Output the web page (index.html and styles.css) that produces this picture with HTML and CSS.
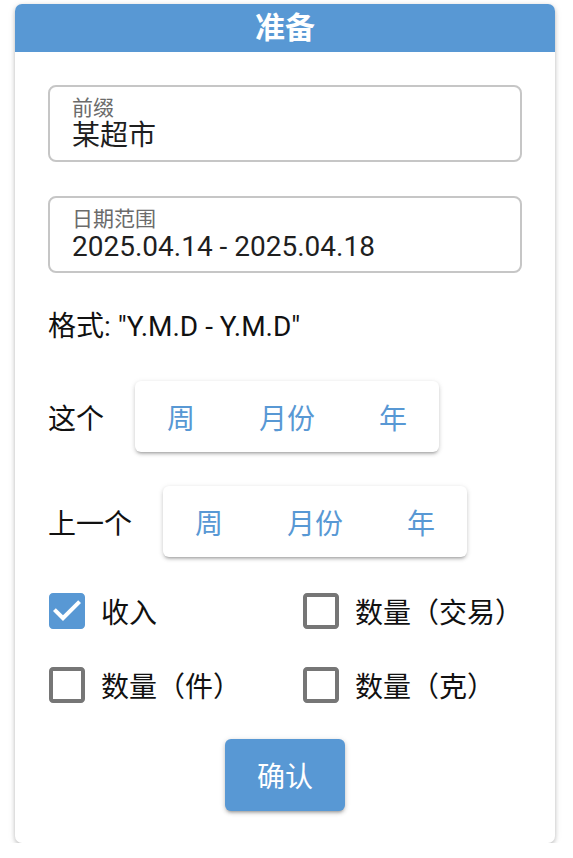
FILE: index.html
```html
<!DOCTYPE html>
<html lang="zh">
<head>
<meta charset="utf-8">
<title>准备</title>
<link rel="stylesheet" href="styles.css">
</head>
<body>
<div class="card">
  <div class="card-header">准备</div>
  <div class="card-body">
    <div class="field">
      <div class="field-label">前缀</div>
      <div class="field-value">某超市</div>
    </div>
    <div class="field">
      <div class="field-label">日期范围</div>
      <div class="field-value">2025.04.14 - 2025.04.18</div>
    </div>
    <div class="hint">格式: "Y.M.D - Y.M.D"</div>
    <div class="period-row">
      <span class="period-label">这个</span>
      <div class="btn-group">
        <span class="seg">周</span><span class="seg">月份</span><span class="seg">年</span>
      </div>
    </div>
    <div class="period-row">
      <span class="period-label">上一个</span>
      <div class="btn-group">
        <span class="seg">周</span><span class="seg">月份</span><span class="seg">年</span>
      </div>
    </div>
    <div class="checks">
      <label class="check">
        <svg class="check-icon checked" viewBox="0 0 24 24" width="48" height="48"><path d="M19 3H5c-1.11 0-2 .9-2 2v14c0 1.1.89 2 2 2h14c1.11 0 2-.9 2-2V5c0-1.1-.89-2-2-2zm-9 14l-5-5 1.41-1.41L10 14.170l7.59-7.59L19 8l-9 9z"/></svg>
        <span>收入</span>
      </label>
      <label class="check">
        <svg class="check-icon" viewBox="0 0 24 24" width="48" height="48"><path d="M19 5v14H5V5h14m0-2H5c-1.1 0-2 .9-2 2v14c0 1.1.9 2 2 2h14c1.1 0 2-.9 2-2V5c0-1.1-.9-2-2-2z"/></svg>
        <span>数量（交易）</span>
      </label>
      <label class="check">
        <svg class="check-icon" viewBox="0 0 24 24" width="48" height="48"><path d="M19 5v14H5V5h14m0-2H5c-1.1 0-2 .9-2 2v14c0 1.1.9 2 2 2h14c1.1 0 2-.9 2-2V5c0-1.1-.9-2-2-2z"/></svg>
        <span>数量（件）</span>
      </label>
      <label class="check">
        <svg class="check-icon" viewBox="0 0 24 24" width="48" height="48"><path d="M19 5v14H5V5h14m0-2H5c-1.1 0-2 .9-2 2v14c0 1.1.9 2 2 2h14c1.1 0 2-.9 2-2V5c0-1.1-.9-2-2-2z"/></svg>
        <span>数量（克）</span>
      </label>
    </div>
    <div class="actions">
      <button class="confirm">确认</button>
    </div>
  </div>
</div>
</body>
</html>
```
FILE: styles.css
```css
* { box-sizing: border-box; }
body {
  margin: 0;
  background: #ffffff;
  font-family: Roboto, "Noto Sans CJK SC", sans-serif;
  color: #1f1f1f;
}
.card {
  width: 540px;
  margin: 4px 0 0 15px;
  background: #fff;
  border-radius: 7px;
  box-shadow: 0 2px 4px rgba(0,0,0,0.22), 0 1px 8px rgba(0,0,0,0.08);
  overflow: hidden;
}
.card-header {
  height: 48px;
  line-height: 48px;
  background: #5898d4;
  color: #fff;
  text-align: center;
  font-size: 30px;
  font-weight: 700;
}
.card-body {
  padding: 33px 33px 32px 33px;
  display: flex;
  flex-direction: column;
  gap: 34px;
}
.field {
  border: 2px solid #c6c6c6;
  border-radius: 8px;
  padding: 9px 22px 8px 22px;
}
.field-label {
  font-size: 21px;
  line-height: 24px;
  color: #6b6b6b;
}
.field-value {
  font-size: 28px;
  line-height: 32px;
  color: #1f1f1f;
}
.hint {
  font-size: 28px;
  line-height: 40px;
  color: #111;
}
.period-row {
  display: flex;
  align-items: center;
  gap: 31px;
}
.period-label {
  font-size: 28px;
  color: #111;
}
.btn-group {
  display: flex;
  height: 71px;
  background: #fff;
  border-radius: 6px;
  box-shadow: 0 3px 3px -2px rgba(0,0,0,0.25), 0 2px 4px rgba(0,0,0,0.14), 0 1px 6px rgba(0,0,0,0.08);
}
.seg {
  display: flex;
  align-items: center;
  padding: 0 32px;
  font-size: 28px;
  color: #5898d4;
}
.checks {
  display: grid;
  grid-template-columns: 254px 1fr;
  row-gap: 34px;
  margin-left: -5px;
}
.check {
  display: flex;
  align-items: center;
  height: 40px;
  gap: 10px;
  font-size: 28px;
  color: #111;
}
.check-icon {
  flex: none;
  fill: #767676;
}
.check-icon.checked { fill: #5898d4; }
.actions {
  display: flex;
  justify-content: center;
}
.confirm {
  height: 72px;
  padding: 0 32px;
  border: none;
  border-radius: 6px;
  background: #5898d4;
  color: #fff;
  font-family: Roboto, "Noto Sans CJK SC", sans-serif;
  font-size: 28px;
  box-shadow: 0 3px 3px -2px rgba(0,0,0,0.25), 0 2px 4px rgba(0,0,0,0.16), 0 1px 6px rgba(0,0,0,0.1);
}
```
